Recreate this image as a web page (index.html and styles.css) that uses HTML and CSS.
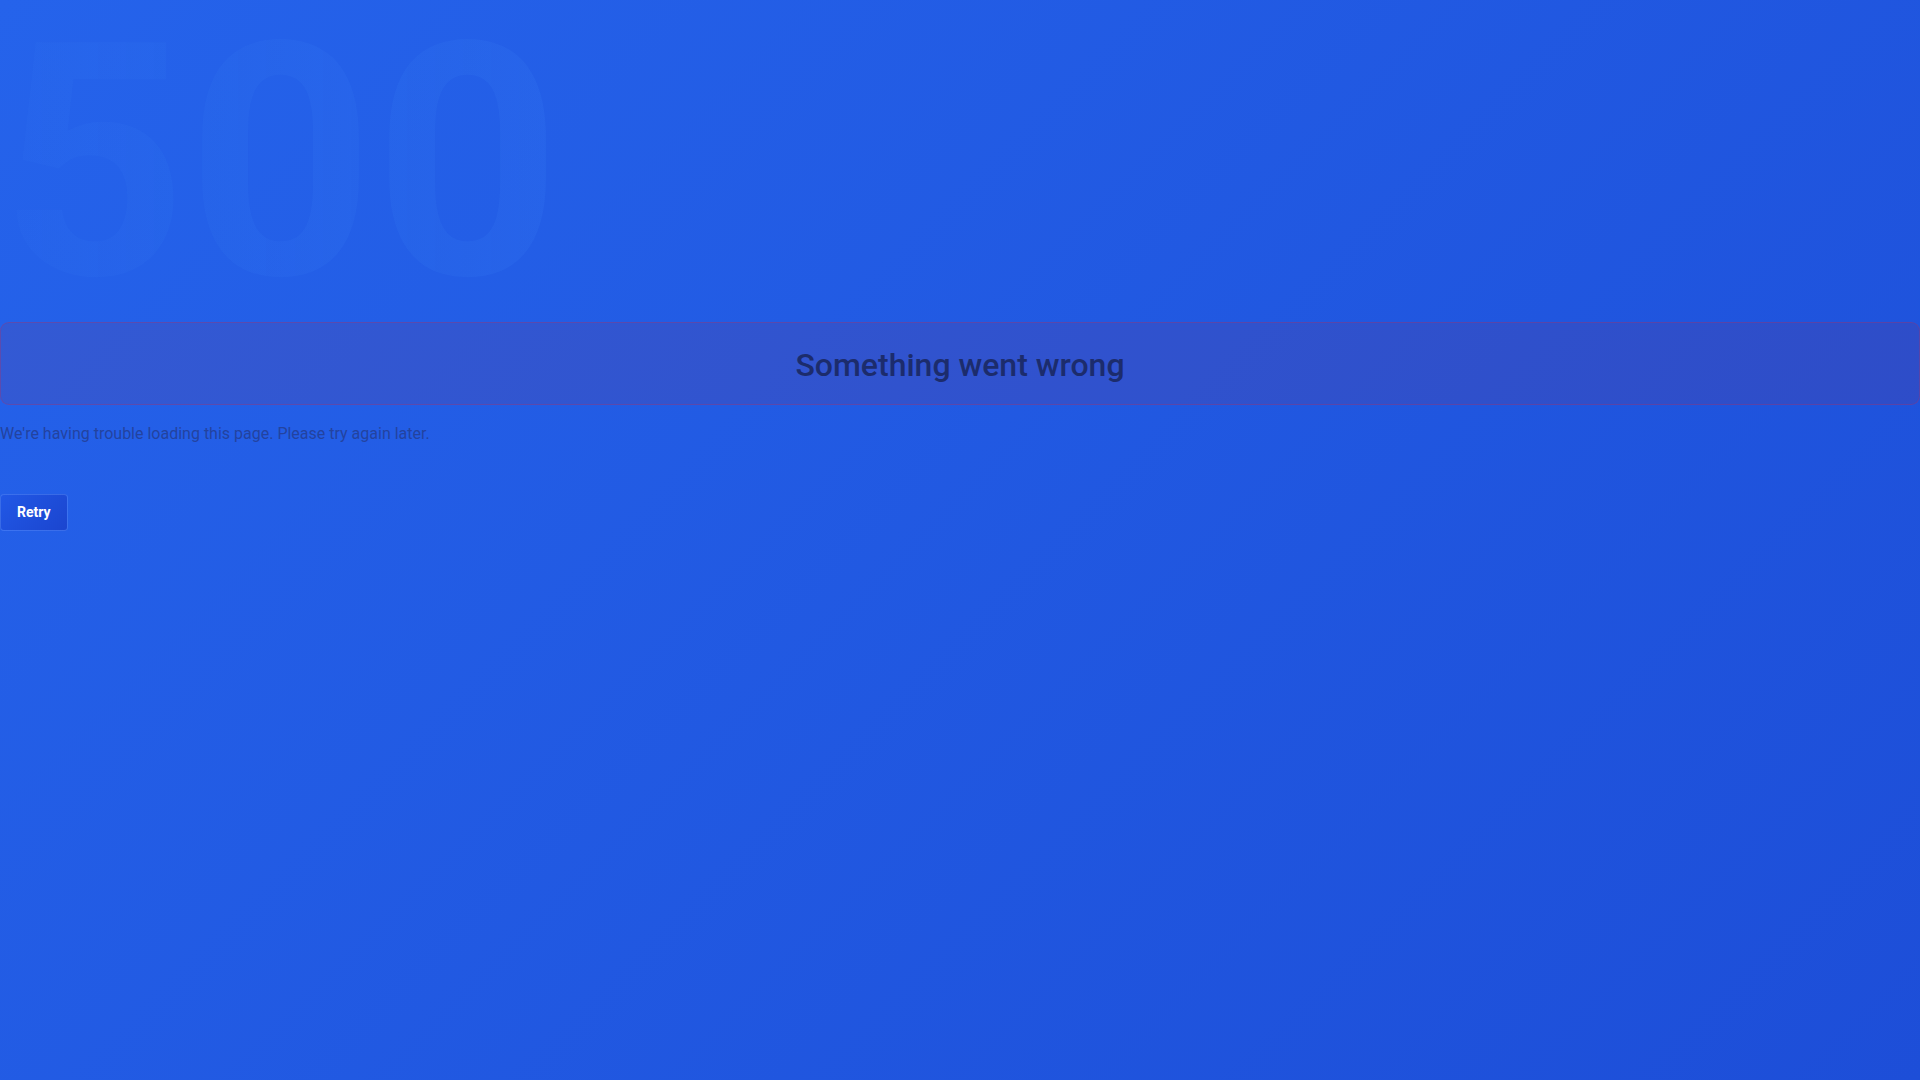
FILE: index.html
```html
<!DOCTYPE html>
<html lang="en">
<head>
<meta charset="utf-8">
<title>Error 500</title>
<link rel="stylesheet" href="styles.css">
</head>
<body>
<main class="page">
  <div class="code" aria-hidden="true">500</div>
  <div class="banner">
    <h1 class="title">Something went wrong</h1>
  </div>
  <p class="message">We're having trouble loading this page. Please try again later.</p>
  <button class="retry" type="button">Retry</button>
</main>
</body>
</html>
```
FILE: styles.css
```css
html, body {
  margin: 0;
  padding: 0;
  height: 100%;
}
body {
  font-family: Roboto, "Liberation Sans", Arial, sans-serif;
  background: linear-gradient(135deg, #2563eb 0%, #1d4ed8 100%);
  min-height: 100vh;
}
.page {
  display: flex;
  flex-direction: column;
  align-items: flex-start;
}
.code {
  font-size: 326px;
  font-weight: 700;
  line-height: 318px;
  padding-top: 4px;
  color: rgba(59, 130, 246, 0.13);
  background: linear-gradient(90deg, rgba(59, 130, 246, 0.09) 0%, rgba(59, 130, 246, 0.17) 100%);
  -webkit-background-clip: text;
  background-clip: text;
  -webkit-text-fill-color: transparent;
  user-select: none;
}
.banner {
  align-self: stretch;
  border: 1px solid rgba(200, 40, 80, 0.28);
  background: rgba(185, 28, 28, 0.1);
  border-radius: 9px;
  padding: 22px 0 18px;
}
.title {
  margin: 0;
  text-align: center;
  font-size: 32px;
  font-weight: 500;
  line-height: 41px;
  color: #1c2c6c;
}
.message {
  margin: 17px 0 0;
  font-size: 16px;
  line-height: 24px;
  color: #23439f;
}
.retry {
  margin-top: 48px;
  font-family: Roboto, "Liberation Sans", Arial, sans-serif;
  font-size: 14px;
  font-weight: 700;
  line-height: 17px;
  color: #ffffff;
  padding: 9px 16px;
  border: 1px solid rgba(96, 150, 255, 0.45);
  border-radius: 4px;
  background: linear-gradient(135deg, #2158e6 0%, #1b45cf 100%);
  cursor: pointer;
}
```
